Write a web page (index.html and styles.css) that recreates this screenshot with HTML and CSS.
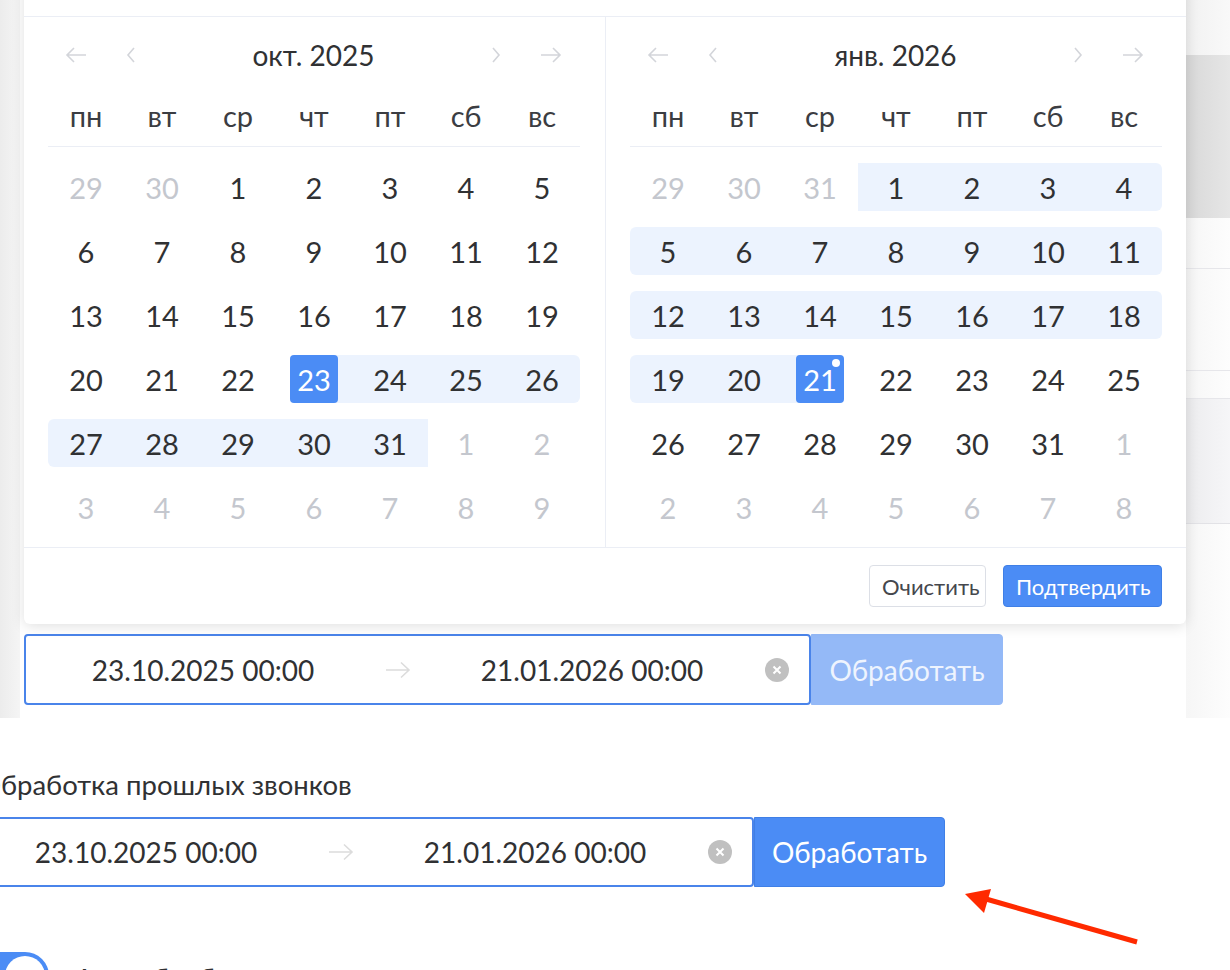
FILE: index.html
```html
<!DOCTYPE html>
<html lang="ru">
<head>
    <meta charset="UTF-8">
    <meta name="viewport" content="width=device-width, initial-scale=1.0">
    <title>Обработка звонков</title>
    <link rel="stylesheet" href="styles.css">
</head>
<body>
<div class="screen">

    <div class="top">
        <div class="strip"></div>
        <div class="main">
            <div class="range-row">
                <div class="range-input">
                    <span class="ri-text">23.10.2025 00:00</span>
                    <span class="ri-sep">
                        <svg width="26" height="18" viewBox="0 0 26 18"><path d="M1 9h23M16 1.5l8 7.5-8 7.5" fill="none" stroke="#dcdcdc" stroke-width="1.6"/></svg>
                    </span>
                    <span class="ri-text end">21.01.2026 00:00</span>
                    <span class="ri-clear">
                        <svg width="24" height="24" viewBox="0 0 24 24"><circle cx="12" cy="12" r="12" fill="#c0c0c0"/><path d="M8.5 8.5l7 7M15.5 8.5l-7 7" stroke="#fff" stroke-width="2"/></svg>
                    </span>
                </div>
                <button class="btn-process disabled">Обработать</button>
            </div>
        </div>
        <div class="edge">
            <div class="e1"></div>
            <div class="e2"></div>
            <div class="e3"></div>
            <div class="e4"></div>
            <div class="e5"></div>
            <div class="e6"></div>
        </div>
    </div>

    <div class="lower">
        <div class="label">Обработка прошлых звонков</div>
        <div class="range-row">
            <div class="range-input">
                <span class="ri-text">23.10.2025 00:00</span>
                <span class="ri-sep">
                    <svg width="26" height="18" viewBox="0 0 26 18"><path d="M1 9h23M16 1.5l8 7.5-8 7.5" fill="none" stroke="#dcdcdc" stroke-width="1.6"/></svg>
                </span>
                <span class="ri-text end">21.01.2026 00:00</span>
                <span class="ri-clear">
                    <svg width="24" height="24" viewBox="0 0 24 24"><circle cx="12" cy="12" r="12" fill="#c0c0c0"/><path d="M8.5 8.5l7 7M15.5 8.5l-7 7" stroke="#fff" stroke-width="2"/></svg>
                </span>
            </div>
            <button class="btn-process">Обработать</button>
        </div>
        <div class="toggle-row">
            <span class="switch"><span class="knob"></span></span>
            <span class="toggle-text">Автообработка</span>
        </div>
    </div>

    <!-- выпадающий календарь диапазона -->
    <div class="picker">
        <div class="picker-top"></div>
        <div class="picker-body">

            <div class="cal left">
                <div class="cal-head">
                    <span class="nav wide"><svg width="22" height="16" viewBox="0 0 22 16"><path d="M21 8H2M9 1L2 8l7 7" fill="none" stroke="#d3d5da" stroke-width="1.6"/></svg></span>
                    <span class="nav"><svg width="10" height="18" viewBox="0 0 10 18"><path d="M8 2L2 9l6 7" fill="none" stroke="#d3d5da" stroke-width="1.6"/></svg></span>
                    <span class="cal-title">окт. 2025</span>
                    <span class="nav"><svg width="10" height="18" viewBox="0 0 10 18"><path d="M2 2l6 7-6 7" fill="none" stroke="#d3d5da" stroke-width="1.6"/></svg></span>
                    <span class="nav wide"><svg width="22" height="16" viewBox="0 0 22 16"><path d="M1 8h19M13 1l7 7-7 7" fill="none" stroke="#d3d5da" stroke-width="1.6"/></svg></span>
                </div>
                <div class="week">
                    <span>пн</span><span>вт</span><span>ср</span><span>чт</span><span>пт</span><span>сб</span><span>вс</span>
                </div>
                <div class="days">
                    <div class="d muted"><span>29</span></div>
                    <div class="d muted"><span>30</span></div>
                    <div class="d"><span>1</span></div>
                    <div class="d"><span>2</span></div>
                    <div class="d"><span>3</span></div>
                    <div class="d"><span>4</span></div>
                    <div class="d"><span>5</span></div>

                    <div class="d"><span>6</span></div>
                    <div class="d"><span>7</span></div>
                    <div class="d"><span>8</span></div>
                    <div class="d"><span>9</span></div>
                    <div class="d"><span>10</span></div>
                    <div class="d"><span>11</span></div>
                    <div class="d"><span>12</span></div>

                    <div class="d"><span>13</span></div>
                    <div class="d"><span>14</span></div>
                    <div class="d"><span>15</span></div>
                    <div class="d"><span>16</span></div>
                    <div class="d"><span>17</span></div>
                    <div class="d"><span>18</span></div>
                    <div class="d"><span>19</span></div>

                    <div class="d"><span>20</span></div>
                    <div class="d"><span>21</span></div>
                    <div class="d"><span>22</span></div>
                    <div class="d start"><span><b>23</b></span></div>
                    <div class="d in"><span>24</span></div>
                    <div class="d in"><span>25</span></div>
                    <div class="d in"><span>26</span></div>

                    <div class="d in"><span>27</span></div>
                    <div class="d in"><span>28</span></div>
                    <div class="d in"><span>29</span></div>
                    <div class="d in"><span>30</span></div>
                    <div class="d in"><span>31</span></div>
                    <div class="d muted"><span>1</span></div>
                    <div class="d muted"><span>2</span></div>

                    <div class="d muted"><span>3</span></div>
                    <div class="d muted"><span>4</span></div>
                    <div class="d muted"><span>5</span></div>
                    <div class="d muted"><span>6</span></div>
                    <div class="d muted"><span>7</span></div>
                    <div class="d muted"><span>8</span></div>
                    <div class="d muted"><span>9</span></div>
                </div>
            </div>

            <div class="cal right">
                <div class="cal-head">
                    <span class="nav wide"><svg width="22" height="16" viewBox="0 0 22 16"><path d="M21 8H2M9 1L2 8l7 7" fill="none" stroke="#d3d5da" stroke-width="1.6"/></svg></span>
                    <span class="nav"><svg width="10" height="18" viewBox="0 0 10 18"><path d="M8 2L2 9l6 7" fill="none" stroke="#d3d5da" stroke-width="1.6"/></svg></span>
                    <span class="cal-title">янв. 2026</span>
                    <span class="nav"><svg width="10" height="18" viewBox="0 0 10 18"><path d="M2 2l6 7-6 7" fill="none" stroke="#d3d5da" stroke-width="1.6"/></svg></span>
                    <span class="nav wide"><svg width="22" height="16" viewBox="0 0 22 16"><path d="M1 8h19M13 1l7 7-7 7" fill="none" stroke="#d3d5da" stroke-width="1.6"/></svg></span>
                </div>
                <div class="week">
                    <span>пн</span><span>вт</span><span>ср</span><span>чт</span><span>пт</span><span>сб</span><span>вс</span>
                </div>
                <div class="days">
                    <div class="d muted"><span>29</span></div>
                    <div class="d muted"><span>30</span></div>
                    <div class="d muted"><span>31</span></div>
                    <div class="d in"><span>1</span></div>
                    <div class="d in"><span>2</span></div>
                    <div class="d in"><span>3</span></div>
                    <div class="d in"><span>4</span></div>

                    <div class="d in"><span>5</span></div>
                    <div class="d in"><span>6</span></div>
                    <div class="d in"><span>7</span></div>
                    <div class="d in"><span>8</span></div>
                    <div class="d in"><span>9</span></div>
                    <div class="d in"><span>10</span></div>
                    <div class="d in"><span>11</span></div>

                    <div class="d in"><span>12</span></div>
                    <div class="d in"><span>13</span></div>
                    <div class="d in"><span>14</span></div>
                    <div class="d in"><span>15</span></div>
                    <div class="d in"><span>16</span></div>
                    <div class="d in"><span>17</span></div>
                    <div class="d in"><span>18</span></div>

                    <div class="d in"><span>19</span></div>
                    <div class="d in"><span>20</span></div>
                    <div class="d end today"><span><b>21</b></span></div>
                    <div class="d"><span>22</span></div>
                    <div class="d"><span>23</span></div>
                    <div class="d"><span>24</span></div>
                    <div class="d"><span>25</span></div>

                    <div class="d"><span>26</span></div>
                    <div class="d"><span>27</span></div>
                    <div class="d"><span>28</span></div>
                    <div class="d"><span>29</span></div>
                    <div class="d"><span>30</span></div>
                    <div class="d"><span>31</span></div>
                    <div class="d muted"><span>1</span></div>

                    <div class="d muted"><span>2</span></div>
                    <div class="d muted"><span>3</span></div>
                    <div class="d muted"><span>4</span></div>
                    <div class="d muted"><span>5</span></div>
                    <div class="d muted"><span>6</span></div>
                    <div class="d muted"><span>7</span></div>
                    <div class="d muted"><span>8</span></div>
                </div>
            </div>

        </div>
        <div class="picker-foot">
            <button class="btn-plain">Очистить</button>
            <button class="btn-primary">Подтвердить</button>
        </div>
    </div>

    <!-- стрелка-пометка -->
    <svg class="mark" width="200" height="80" viewBox="0 0 200 80">
        <path d="M187 67L36 24" stroke="#ff2a00" stroke-width="5" stroke-linecap="butt"/>
        <polygon points="15,19 41,14 34,38" fill="#ff2a00"/>
    </svg>

</div>
</body>
</html>
```

FILE: styles.css
```css
* {
    box-sizing: border-box;
}
body {
    margin: 0;
    font-family: Lato, "Noto Sans", sans-serif;
    color: #303133;
    background: #fff;
}
button {
    font-family: inherit;
    cursor: pointer;
}
.screen {
    position: relative;
    width: 1230px;
    height: 970px;
    overflow: hidden;
}

/* фон страницы под календарём */
.top {
    display: flex;
    height: 718px;
}
.strip {
    width: 20px;
    background: linear-gradient(to right, #ececec, #f5f5f5);
}
.main {
    flex: 1;
    padding: 634px 0 0 4px;
}
.edge {
    width: 44px;
    display: flex;
    flex-direction: column;
    background: linear-gradient(to right, #f6f6f6, #fdfdfd);
}
.e1 { height: 55px; background: linear-gradient(to right, #f1f1f1, #f9f9f9); }
.e2 { height: 163px; background: linear-gradient(to right, #d8d8d8, #e6e6e6); }
.e3 { height: 51px; border-bottom: 1px solid #e6e6ea; }
.e4 { height: 102px; border-bottom: 1px solid #e6e6ea; }
.e5 { height: 28px; border-bottom: 1px solid #e6e6ea; }
.e6 { height: 125px; background: linear-gradient(to right, #ececee, #f6f6f8); border-bottom: 1px solid #e2e2e6; }

/* поле диапазона */
.range-row {
    display: flex;
}
.range-input {
    width: 787px;
    height: 71px;
    display: flex;
    align-items: center;
    border: 2px solid #4a84ea;
    border-radius: 4px;
    background: #fff;
    font-size: 28px;
    color: #303133;
}
.ri-text {
    width: 318px;
    margin-left: 18px;
    text-align: center;
}
.ri-text.end {
    width: 316px;
    margin-left: 0;
}
.ri-sep {
    width: 72px;
    display: flex;
    justify-content: center;
}
.ri-clear {
    display: flex;
    margin-left: 15px;
}
.btn-process {
    width: 192px;
    height: 71px;
    border: 1px solid #3f7fe6;
    border-radius: 0 4px 4px 0;
    background: #4b8cf5;
    color: #fff;
    font-size: 28px;
    padding: 0;
}
.btn-process.disabled {
    background: #94b9f7;
    border-color: #94b9f7;
    color: #eef4fe;
}

.lower {
    margin-left: -33px;
}
.label {
    margin-top: 49px;
    padding-left: 12px;
    font-size: 27.5px;
    line-height: 36px;
    color: #303133;
}
.lower .range-row {
    margin-top: 14px;
}
.lower .range-input {
    height: 70px;
}
.lower .btn-process {
    width: 191px;
    height: 70px;
}
.toggle-row {
    display: flex;
    align-items: center;
    margin-top: 65px;
}
.switch {
    display: flex;
    justify-content: flex-end;
    width: 96px;
    height: 48px;
    margin-left: -14px;
    padding: 4px;
    border-radius: 24px;
    background: #4b8cf5;
}
.knob {
    width: 40px;
    height: 40px;
    border-radius: 50%;
    background: #fff;
}
.toggle-text {
    margin-left: 26px;
    padding-top: 6px;
    font-size: 28px;
}

/* календарь */
.picker {
    position: absolute;
    left: 24px;
    top: -30px;
    width: 1162px;
    background: #fff;
    border-radius: 6px;
    box-shadow: 0 2px 14px rgba(0, 0, 0, 0.13);
}
.picker-top {
    height: 47px;
    border-bottom: 1px solid #ebeef5;
}
.picker-body {
    display: flex;
}
.cal {
    width: 580px;
    padding: 20px 24px 8px;
}
.cal.left {
    width: 582px;
    padding-right: 25px;
    border-right: 1px solid #ebeef5;
}
.cal-head {
    display: flex;
    align-items: center;
    height: 36px;
}
.nav {
    width: 30px;
    display: flex;
    justify-content: center;
}
.nav.wide {
    width: 40px;
}
.cal-head .nav:first-child {
    margin-left: 8px;
    margin-right: 20px;
}
.cal-head .nav:last-child {
    margin-left: 20px;
    margin-right: 9px;
}
.cal-title {
    flex: 1;
    text-align: center;
    font-size: 28px;
    color: #303133;
}
.week {
    display: grid;
    grid-template-columns: repeat(7, 76px);
    margin-top: 12px;
    height: 62px;
    align-items: center;
    border-bottom: 1px solid #ebeef5;
    font-size: 29px;
    color: #3b3d42;
    text-align: center;
}
.days {
    display: grid;
    grid-template-columns: repeat(7, 76px);
    padding-top: 8px;
    font-size: 29px;
}
.d {
    height: 64px;
    padding: 8px 0;
}
.d span {
    display: flex;
    height: 48px;
    align-items: center;
    justify-content: center;
}
.d.muted {
    color: #c4c7ce;
}
.d.in span {
    background: #ecf3fe;
}
.d.in:nth-child(7n+1) span {
    border-radius: 6px 0 0 6px;
}
.d.in:nth-child(7n) span {
    border-radius: 0 6px 6px 0;
}
.d.start span {
    background: linear-gradient(to right, transparent 50%, #ecf3fe 50%);
}
.d.end span {
    background: linear-gradient(to right, #ecf3fe 50%, transparent 50%);
}
.d b {
    position: relative;
    display: flex;
    width: 48px;
    height: 48px;
    align-items: center;
    justify-content: center;
    font-weight: normal;
    color: #fff;
    background: #4b8cf5;
    border-radius: 4px;
}
.d.today b::after {
    content: "";
    position: absolute;
    top: 4px;
    right: 4px;
    width: 8px;
    height: 8px;
    border-radius: 50%;
    background: #fff;
}
.picker-foot {
    display: flex;
    justify-content: flex-end;
    align-items: center;
    gap: 17px;
    height: 77px;
    padding-right: 24px;
    border-top: 1px solid #ebeef5;
}
.btn-plain,
.btn-primary {
    height: 42px;
    padding: 0 12px;
    font-size: 22px;
    border-radius: 4px;
}
.btn-plain {
    width: 117px;
    border: 1px solid #dcdfe6;
    background: #fff;
    color: #45474d;
}
.btn-primary {
    width: 159px;
    border: 1px solid #3f7fe6;
    background: #4b8cf5;
    color: #fff;
}

.mark {
    position: absolute;
    left: 950px;
    top: 875px;
}
```
